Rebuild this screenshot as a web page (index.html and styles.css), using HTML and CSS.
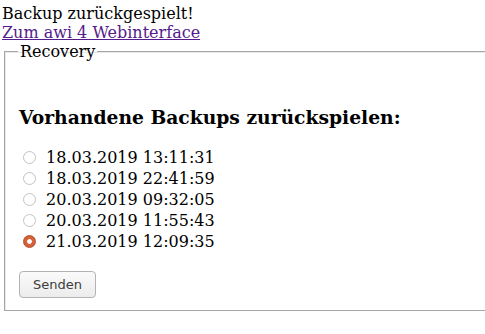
FILE: index.html
```
<!DOCTYPE html>
<html lang="de">
<head>
  <meta charset="UTF-8">
  <title>Recovery</title>
  <link rel="stylesheet" href="styles.css">
</head>
<body>
  Backup zurückgespielt!<br>
  <a href="#">Zum awi 4 Webinterface</a>
  <form class="recovery" action="#" method="post">
    <fieldset>
      <legend>Recovery</legend>
      <h3>Vorhandene Backups zurückspielen:</h3>
      <label><input type="radio" name="backup" value="1"> 18.03.2019 13:11:31</label><br>
      <label><input type="radio" name="backup" value="2"> 18.03.2019 22:41:59</label><br>
      <label><input type="radio" name="backup" value="3"> 20.03.2019 09:32:05</label><br>
      <label><input type="radio" name="backup" value="4"> 20.03.2019 11:55:43</label><br>
      <label><input type="radio" name="backup" value="5" checked> 21.03.2019 12:09:35</label>
      <div class="actions">
        <input type="submit" class="btn" value="Senden">
      </div>
    </fieldset>
  </form>
</body>
</html>
```

FILE: styles.css
```
html, body {
  background: #fff;
}
body {
  margin: 4px 0 0 2px;
  font-family: "DejaVu Serif", serif;
  font-size: 16px;
  color: #000;
}
a {
  color: #551a8b;
}
.recovery {
  margin: 0;
}
.recovery fieldset {
  margin: 0 -4px 0 2px;
  padding: 0 12px 12px 14px;
  border: 1px solid #a6a6a6;
  border-right: none;
  box-shadow: inset 1px 1px 0 #e8e8e8;
}
.recovery legend {
  padding: 0 2px;
  margin-left: -1px;
}
.recovery h3 {
  margin: 45px 0 19px 0;
  font-size: 18.72px;
}
.recovery label {
  line-height: 21px;
}
.recovery input[type="radio"] {
  -webkit-appearance: none;
  appearance: none;
  width: 13px;
  height: 13px;
  margin: 3px 5px 0 4px;
  border: 1px solid #c4c4c4;
  border-radius: 50%;
  background: radial-gradient(circle, #fff 60%, #f4f4f4 100%);
  vertical-align: -1px;
  box-sizing: border-box;
}
.recovery input[type="radio"]:checked {
  border: 1px solid #b4502c;
  background: radial-gradient(circle, #fff 0, #fff 2px, #d8643c 2.7px, #cf5a33 100%);
}
.actions {
  margin-top: 19px;
}
.recovery .btn {
  display: block;
  margin: 0;
  width: 77px;
  height: 27px;
  padding: 0;
  font-family: "DejaVu Sans", sans-serif;
  font-size: 13px;
  color: #3c3c3c;
  border: 1px solid #b3b3b3;
  border-radius: 4px;
  background: linear-gradient(#fafafa, #ececec);
}
```
